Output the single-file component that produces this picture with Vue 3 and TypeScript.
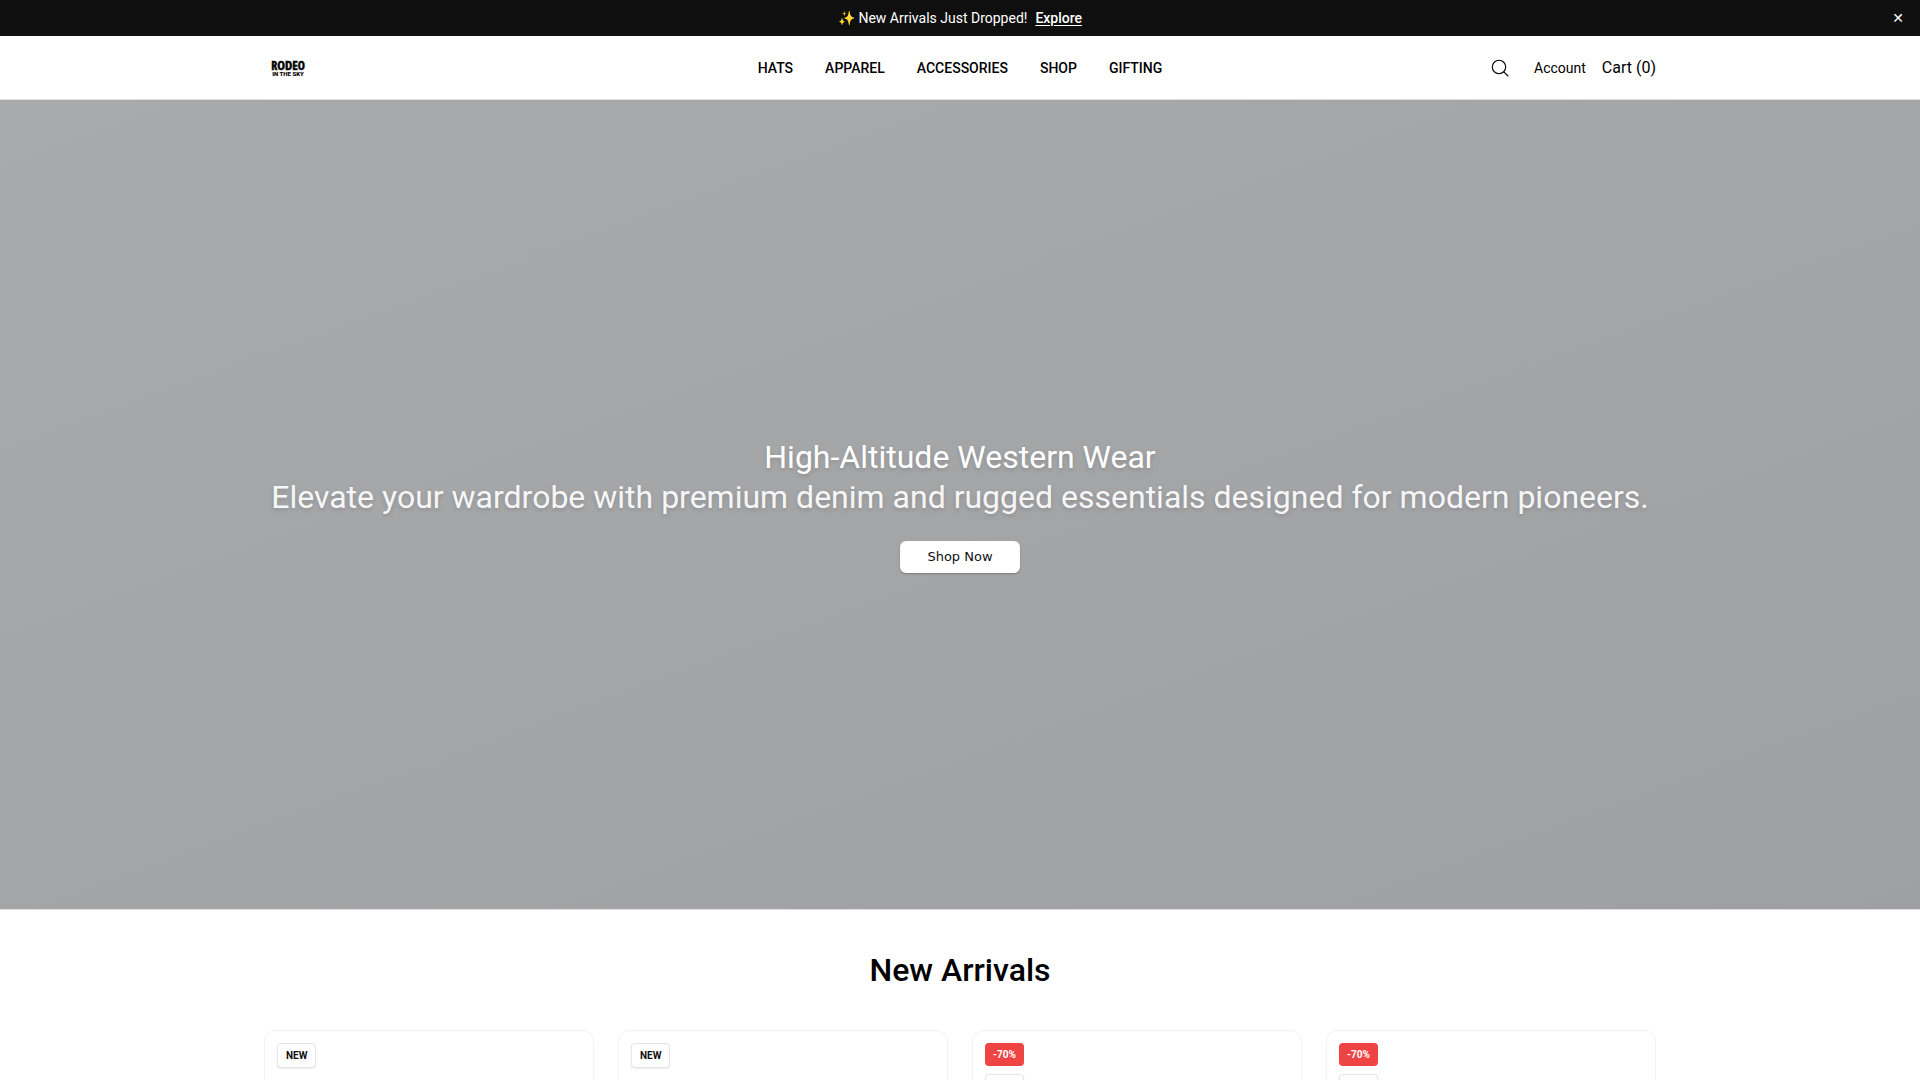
<script setup lang="ts">
import { ref } from 'vue'

interface Product {
  id: number
  badges: { label: string; kind: 'new' | 'sale' }[]
}

const showAnnouncement = ref(true)
const cartCount = ref(0)
const links: string[] = ['HATS', 'APPAREL', 'ACCESSORIES', 'SHOP', 'GIFTING']

const products: Product[] = [
  { id: 1, badges: [{ label: 'NEW', kind: 'new' }] },
  { id: 2, badges: [{ label: 'NEW', kind: 'new' }] },
  { id: 3, badges: [{ label: '-70%', kind: 'sale' }, { label: 'NEW', kind: 'new' }] },
  { id: 4, badges: [{ label: '-70%', kind: 'sale' }, { label: 'NEW', kind: 'new' }] },
]
</script>

<template>
  <div class="page">
    <div v-if="showAnnouncement" class="announcement">
      <p class="announcement-text">
        <span>✨ New Arrivals Just Dropped!</span>
        <a href="#new-arrivals">Explore</a>
      </p>
      <button class="dismiss" type="button" aria-label="Dismiss" @click="showAnnouncement = false">✕</button>
    </div>

    <header class="header">
      <div class="header-inner">
        <a class="logo" href="#" aria-label="Rodeo in the Sky">
          <svg width="48" height="32" viewBox="0 0 48 32" text-anchor="middle">
            <text class="logo-main" x="24" y="18"><tspan class="logo-edge">R</tspan>ODE<tspan class="logo-edge">O</tspan></text>
            <text class="logo-sub" x="24" y="24">IN THE SKY</text>
          </svg>
        </a>
        <nav class="nav">
          <a v-for="link in links" :key="link" href="#">{{ link }}</a>
        </nav>
        <div class="actions">
          <button class="search" type="button" aria-label="Search">
            <svg width="20" height="20" viewBox="0 0 20 20" fill="none" stroke="currentColor" stroke-width="1.1">
              <circle cx="9" cy="9" r="6.7" />
              <path d="M13.8 13.8L18 18" stroke-linecap="round" />
            </svg>
          </button>
          <a class="account" href="#">Account</a>
          <a class="cart" href="#">Cart ({{ cartCount }})</a>
        </div>
      </div>
    </header>

    <main>
      <section class="hero">
        <h1>High-Altitude Western Wear</h1>
        <p>Elevate your wardrobe with premium denim and rugged essentials designed for modern pioneers.</p>
        <button class="shop-now" type="button">Shop Now</button>
      </section>

      <section id="new-arrivals" class="arrivals">
        <h2>New Arrivals</h2>
        <div class="grid">
          <article v-for="product in products" :key="product.id" class="card">
            <span v-for="badge in product.badges" :key="badge.label" class="badge" :class="badge.kind">{{ badge.label }}</span>
          </article>
        </div>
      </section>
    </main>
  </div>
</template>

<style>
body {
  margin: 0;
  background: #fff;
}
</style>

<style scoped>
.page {
  font-family: Roboto, "Liberation Sans", sans-serif;
  font-size: 14px;
  line-height: 20px;
  color: #000;
}
a {
  color: inherit;
  text-decoration: none;
}
button {
  border: 0;
  padding: 0;
  background: none;
  color: inherit;
  cursor: pointer;
}
h1, h2, p {
  margin: 0;
}
.announcement {
  position: relative;
  display: flex;
  justify-content: center;
  padding: 8px 16px;
  background: #0f0f0f;
  color: #fff;
}
.announcement-text {
  display: flex;
  gap: 8px;
}
.announcement-text a {
  font-weight: 500;
  text-decoration: underline;
  text-underline-offset: 2px;
}
.dismiss {
  position: absolute;
  top: 8px;
  right: 16px;
  font: 14px/20px Roboto, "DejaVu Sans", sans-serif;
}
.header {
  border-bottom: 1px solid #dedfe0;
  background: #fff;
}
.header-inner {
  display: grid;
  grid-template-columns: 1fr auto 1fr;
  align-items: center;
  box-sizing: border-box;
  max-width: 1440px;
  min-height: 63px;
  margin: 0 auto;
  padding: 0 24px;
}
.logo {
  display: flex;
}
.logo-main {
  font-family: "Liberation Sans Narrow", "Open Sans Condensed", Roboto, sans-serif;
  font-size: 13px;
  font-weight: 700;
  stroke: #000;
  stroke-width: 0.5px;
}
.logo-edge {
  font-size: 12px;
}
.logo-sub {
  font-size: 6px;
  font-weight: 900;
}
.nav {
  display: flex;
  gap: 32px;
  font-weight: 500;
}
.actions {
  display: flex;
  align-items: center;
  justify-content: flex-end;
  gap: 16px;
}
.search {
  display: flex;
  padding: 8px;
}
.cart {
  font-size: 16px;
  line-height: 24px;
}
.hero {
  display: flex;
  flex-direction: column;
  align-items: center;
  justify-content: center;
  box-sizing: border-box;
  min-height: 75vh;
  border-bottom: 1px solid #dedfe0;
  background: linear-gradient(160deg, #a9aaac, #a4a5a7 50%, #9fa0a3);
  color: #fff;
  font-size: 32px;
  line-height: 40px;
  text-align: center;
  text-shadow: 0 2px 4px rgba(0, 0, 0, 0.15);
}
.hero h1 {
  font-size: 32px;
  font-weight: 400;
}
.hero p {
  opacity: 0.9;
}
.shop-now {
  min-width: 120px;
  margin-top: 24px;
  padding: 6px 24px;
  border-radius: 6px;
  background: #fff;
  box-shadow: 0 1px 2px rgba(0, 0, 0, 0.25);
  color: #0f0f0f;
  font: 13px/20px "DejaVu Sans", sans-serif;
}
.arrivals {
  max-width: 1440px;
  box-sizing: border-box;
  margin: 0 auto;
  padding: 40px 24px;
}
.arrivals h2 {
  margin-bottom: 40px;
  font-size: 32px;
  line-height: 40px;
  font-weight: 500;
  text-align: center;
}
.grid {
  display: grid;
  grid-template-columns: repeat(4, 1fr);
  gap: 24px;
}
.card {
  display: flex;
  flex-direction: column;
  align-items: flex-start;
  gap: 8px;
  box-sizing: border-box;
  min-height: 440px;
  padding: 12px;
  border: 1px solid #f3f3f3;
  border-radius: 12px;
}
.badge {
  box-sizing: border-box;
  min-width: 39px;
  padding: 4px 8px;
  border-radius: 4px;
  font-size: 10px;
  line-height: 15px;
  font-weight: 700;
  text-align: center;
}
.badge.new {
  border: 1px solid #e5e5e5;
  background: #fff;
  box-shadow: 0 1px 2px rgba(0, 0, 0, 0.08);
  color: #0f0f0f;
}
.badge.sale {
  background: #ef4444;
  color: #fff;
}
</style>
